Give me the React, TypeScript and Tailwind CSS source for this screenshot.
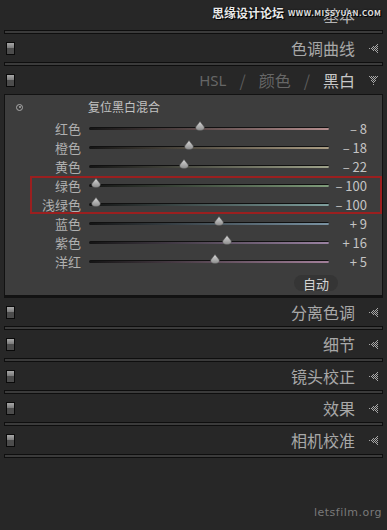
import React from 'react';

const font = { fontFamily: '"Noto Sans CJK SC", "Noto Sans", sans-serif' };

const sliders = [
  { label: '红色', value: -8, text: '– 8', color: '#b58e8e' },
  { label: '橙色', value: -18, text: '– 18', color: '#aa9d84' },
  { label: '黄色', value: -22, text: '– 22', color: '#9ea28a' },
  { label: '绿色', value: -100, text: '– 100', color: '#7f9c7a' },
  { label: '浅绿色', value: -100, text: '– 100', color: '#7fa09e' },
  { label: '蓝色', value: 9, text: '+ 9', color: '#7a93a3' },
  { label: '紫色', value: 16, text: '+ 16', color: '#9a82a2' },
  { label: '洋红', value: 5, text: '+ 5', color: '#a3809a' },
];

const Separator = () => (
  <div className="mx-[4px] h-[4px] border border-[#0e0e0e] bg-[#3b3b3b]" />
);

const Toggle = () => (
  <div className="flex h-[13px] w-[9px] flex-col border border-[#0a0a0a]">
    <div className="h-1/2 bg-gradient-to-b from-[#a8a8a8] to-[#7a7a7a]" />
    <div className="h-1/2 bg-[#4c4c4c]" />
  </div>
);

// dotted triangle, Lightroom style
const Arrow = ({ down = false }: { down?: boolean }) => {
  const dots: [number, number][] = [];
  for (let i = 0; i < 9; i++) {
    for (let j = 0; j < 9; j++) {
      // left-pointing: apex at x=0
      const inside = Math.abs(j - 4) <= i / 2;
      if (inside && (i + j) % 2 === 0) dots.push(down ? [j, 8 - i] : [i, j]);
    }
  }
  return (
    <svg width="9" height="9" viewBox="0 0 9 9">
      {dots.map(([x, y], k) => (
        <rect key={k} x={x} y={y} width="1" height="1" fill="#a8a8a8" />
      ))}
    </svg>
  );
};

const Row = ({ title }: { title: string }) => (
  <div className="flex h-[28px] items-center pl-[6px] pr-[9px]">
    <Toggle />
    <div className="flex-1 text-right text-[16px] leading-none text-[#a8a8a8]">{title}</div>
    <div className="ml-[14px] flex items-center">
      <Arrow />
    </div>
  </div>
);

const Thumb = () => (
  <svg width="10" height="10" viewBox="0 0 10 10">
    <defs>
      <linearGradient id="tg" x1="0" y1="0" x2="0" y2="1">
        <stop offset="0" stopColor="#d8d8d8" />
        <stop offset="1" stopColor="#8c8c8c" />
      </linearGradient>
    </defs>
    <path d="M5 0.5 L9.3 6 Q9.5 9.5 5 9.5 Q0.5 9.5 0.7 6 Z" fill="url(#tg)" stroke="#555" strokeWidth="0.5" />
  </svg>
);

const Slider = ({ label, value, text, color }: (typeof sliders)[number]) => {
  // thumb travel 7..233 within 240px track, centre 120
  const x = 120 + value * 1.13;
  return (
    <div className="flex h-[19px] items-center">
      <div className="w-[76px] text-right text-[13px] leading-none text-[#b0b0b0]">{label}</div>
      <div className="relative ml-[8px] h-[3px] w-[240px]">
        <div
          className="h-[3px] w-full rounded-full border-t border-[#111]"
          style={{ background: `linear-gradient(to right, #141414, ${color})` }}
        />
        <div className="absolute top-[-6px]" style={{ left: x - 5 }}>
          <Thumb />
        </div>
      </div>
      <div className="w-[38px] text-right text-[13px] leading-none text-[#c4c4c4]">{text}</div>
    </div>
  );
};

export default function App() {
  return (
    <div className="relative h-[530px] w-[387px] overflow-hidden bg-[#272727]" style={font}>
      {/* top: 基本 */}
      <div className="flex h-[30px] items-center justify-end pr-[32px]">
        <span className="text-[16px] leading-none text-[#b4b4b4]">基本</span>
      </div>
      <div className="absolute left-[212px] top-[7px] flex items-center gap-[4px]">
        <span className="text-[12px] font-bold leading-none text-[#e8e8e8] [text-shadow:0_0_2px_#000,1px_1px_0_#000]">
          思缘设计论坛
        </span>
        <span className="text-[8px] font-bold leading-none tracking-[0.5px] text-[#e0e0e0] [text-shadow:0_0_2px_#000,1px_1px_0_#000]">
          WWW.MISSYUAN.COM
        </span>
      </div>
      <Separator />
      <Row title="色调曲线" />
      <Separator />

      {/* HSL header */}
      <div className="flex h-[28px] items-center pl-[6px] pr-[9px]">
        <Toggle />
        <div className="flex flex-1 items-center justify-end text-[16px] leading-none">
          <span className="text-[15px] text-[#666]" style={{ fontFamily: '"Noto Sans", sans-serif' }}>HSL</span>
          <span className="mx-[13px] text-[#5c5c5c]">/</span>
          <span className="text-[#666]">颜色</span>
          <span className="mx-[13px] text-[#5c5c5c]">/</span>
          <span className="text-[#c8c8c8]">黑白</span>
        </div>
        <div className="ml-[14px] flex items-center">
          <Arrow down />
        </div>
      </div>

      {/* B&W panel */}
      <div className="relative mx-[4px] h-[204px] border border-b-[3px] border-[#121212] bg-[#3d3d3d]">
        <div className="flex h-[24px] items-center">
          <div className="ml-[11px] flex h-[7px] w-[7px] items-center justify-center rounded-full border border-[#aaa]">
            <div className="h-[2px] w-[2px] rounded-full bg-[#aaa]" />
          </div>
          <span className="ml-[65px] text-[12px] leading-none text-[#c2c2c2]">复位黑白混合</span>
        </div>
        {sliders.map((s) => (
          <Slider key={s.label} {...s} />
        ))}
        <div className="mt-[4px] flex justify-end pr-[44px]">
          <div className="flex h-[16px] w-[44px] items-center justify-center rounded-full bg-[#353535] text-[13px] leading-none text-[#d4d4d4]">
            自动
          </div>
        </div>
        {/* highlight box */}
        <div className="absolute left-[25px] top-[81px] h-[38px] w-[352px] border-2 border-[#9a1f1f]" />
      </div>

      <Row title="分离色调" />
      <Separator />
      <Row title="细节" />
      <Separator />
      <Row title="镜头校正" />
      <Separator />
      <Row title="效果" />
      <Separator />
      <Row title="相机校准" />
      <Separator />

      <div className="absolute bottom-[12px] right-[5px] text-[11px] leading-none tracking-[0.5px] text-[#7a7a7a]" style={{ fontFamily: '"DejaVu Sans", sans-serif' }}>
        letsfilm.org
      </div>
    </div>
  );
}
